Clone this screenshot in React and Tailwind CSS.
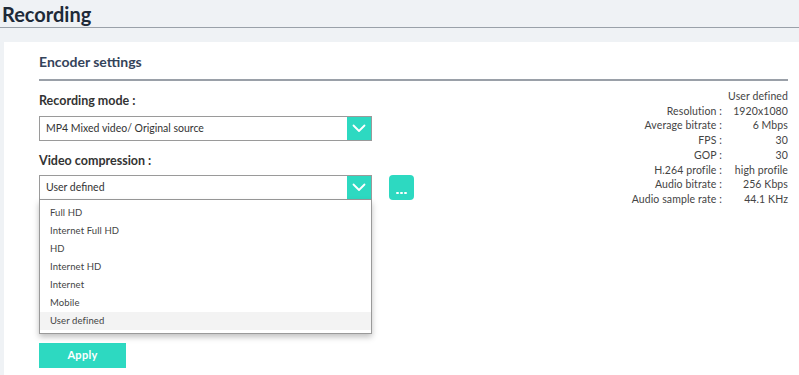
import React from "react";

const teal = "bg-[#2dd9c1]";

function Chevron() {
  return (
    <svg width="14" height="9" viewBox="0 0 14 9" fill="none">
      <path d="M1.5 1.5 L7 7 L12.5 1.5" stroke="white" strokeWidth="1.8" strokeLinecap="round" strokeLinejoin="round" />
    </svg>
  );
}

function Select({ value }) {
  return (
    <div className="flex h-[25px] w-[333px] items-stretch border border-[#9a9a9a] bg-white">
      <div className="flex flex-1 items-center pl-[6px] text-[10.5px] text-[#333]">{value}</div>
      <div className={`flex w-[24px] items-center justify-center ${teal}`}>
        <Chevron />
      </div>
    </div>
  );
}

const items = ["Full HD", "Internet Full HD", "HD", "Internet HD", "Internet", "Mobile", "User defined"];

const info = [
  ["Resolution :", "1920x1080"],
  ["Average bitrate :", "6 Mbps"],
  ["FPS :", "30"],
  ["GOP :", "30"],
  ["H.264 profile :", "high profile"],
  ["Audio bitrate :", "256 Kbps"],
  ["Audio sample rate :", "44.1 KHz"],
];

export default function App() {
  return (
    <div className="h-[375px] w-[799px] overflow-hidden bg-[#eff2f5]" style={{ fontFamily: "Lato, 'Liberation Sans', sans-serif" }}>
      <div className="h-[28px] border-b border-[#9aa1a9] pl-[2px]">
        <h1 className="text-[20px] font-bold leading-[28px] text-[#1e2a38]">Recording</h1>
      </div>
      <div className="ml-[4px] mt-[14px] h-[340px] bg-white pl-[35px] pr-[11px]">
        <div className="flex h-[39px] items-end border-b-2 border-[#9aa0a8] pb-[10px]">
          <h2 className="text-[14px] font-bold leading-none text-[#34435a]">Encoder settings</h2>
        </div>
        <div className="flex">
          <div className="flex-1">
            <div className="mt-[12px] text-[12.5px] font-bold leading-[16px] text-[#333]">Recording mode :</div>
            <div className="mt-[7px]">
              <Select value="MP4 Mixed video/ Original source" />
            </div>
            <div className="mt-[12px] text-[12.5px] font-bold leading-[16px] text-[#333]">Video compression :</div>
            <div className="relative mt-[6px] flex items-center gap-[17px]">
              <Select value="User defined" />
              <div className={`flex h-[25px] w-[25px] items-end justify-center rounded-[4px] pb-[6px] ${teal}`}>
                <div className="flex gap-[1.5px]">
                  <span className="h-[2.5px] w-[2.5px] rounded-full bg-white" />
                  <span className="h-[2.5px] w-[2.5px] rounded-full bg-white" />
                  <span className="h-[2.5px] w-[2.5px] rounded-full bg-white" />
                </div>
              </div>
              <div className="absolute left-0 top-[25px] z-10 w-[333px] border border-t-0 border-[#9a9a9a] bg-white pb-[3px] pt-[4px] shadow-[0_3px_6px_rgba(0,0,0,0.25)]">
                {items.map((it) => (
                  <div
                    key={it}
                    className={`flex h-[18px] items-center pl-[10px] text-[9.5px] tracking-[0.1px] text-[#444] ${it === "User defined" ? "bg-[#f3f3f3]" : ""}`}
                  >
                    {it}
                  </div>
                ))}
              </div>
            </div>
            <div className="mt-[143px]">
              <button className={`flex h-[25px] w-[87px] items-center justify-center text-[11px] font-bold tracking-[0.3px] text-white ${teal}`}>Apply</button>
            </div>
          </div>
          <div className="mt-[8px] flex flex-col text-[10.5px] leading-[14.7px] tracking-[0.1px] text-[#444]">
            <div className="text-right">User defined</div>
            {info.map(([k, v]) => (
              <div key={k} className="flex justify-end">
                <span className="text-right">{k}</span>
                <span className="w-[66px] text-right">{v}</span>
              </div>
            ))}
          </div>
        </div>
      </div>
    </div>
  );
}
